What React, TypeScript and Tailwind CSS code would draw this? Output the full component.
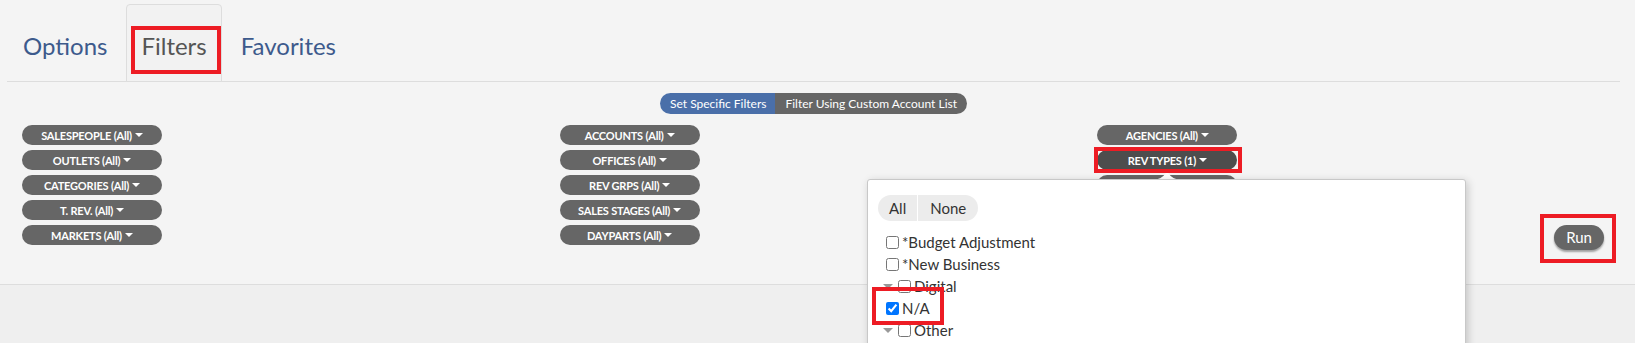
import React from 'react';

const leftCol = ['SALESPEOPLE (All)', 'OUTLETS (All)', 'CATEGORIES (All)', 'T. REV. (All)', 'MARKETS (All)'];
const midCol = ['ACCOUNTS (All)', 'OFFICES (All)', 'REV GRPS (All)', 'SALES STAGES (All)', 'DAYPARTS (All)'];
const rightCol = ['AGENCIES (All)', 'REV TYPES (1)', 'ADVERTISERS (All)'];

const Caret = () => (
  <span className="ml-[3px] inline-block w-0 h-0 border-l-[4px] border-r-[4px] border-t-[4px] border-l-transparent border-r-transparent border-t-white" />
);

const FilterButton: React.FC<{ label: string; active?: boolean }> = ({ label, active }) => (
  <button
    className={`w-[140px] h-[20px] rounded-[10px] flex items-center justify-center text-white text-[11px] font-bold tracking-[-0.2px] leading-none ${
      active ? 'bg-[#4d4d4d]' : 'bg-[#666666]'
    }`}
  >
    {label}
    <Caret />
  </button>
);

const TreeCaret = () => (
  <span className="inline-block w-0 h-0 border-l-[5px] border-r-[5px] border-t-[5px] border-l-transparent border-r-transparent border-t-[#999999]" />
);

const RedBox: React.FC<{ className: string }> = ({ className }) => (
  <div className={`absolute border-[4px] border-[#ed1c24] pointer-events-none ${className}`} />
);

export default function App() {
  return (
    <div className="relative w-full h-[343px] overflow-hidden bg-[#efefef] font-['Lato','Liberation_Sans',sans-serif]">
      <div className="h-[285px] bg-[#f4f4f4] border-b border-[#dddddd]">
        <div className="ml-[7px] w-[1613px]">
          {/* tabs */}
          <div className="flex items-end h-[82px] pt-[4px] pl-[1px] gap-[4px] border-b border-[#dddddd]">
            <div className="h-[77px] px-[15px] pt-[27px] text-[24px] leading-[29px] text-[#3d5a8c]">Options</div>
            <div className="h-[78px] px-[14px] pt-[26px] -mb-[1px] text-[24px] leading-[29px] text-[#555555] bg-[#f2f2f2] border border-[#dddddd] rounded-t-[4px]">
              Filters
            </div>
            <div className="h-[77px] px-[15px] pt-[27px] text-[24px] leading-[29px] text-[#3d5a8c]">Favorites</div>
          </div>

          {/* mode switch */}
          <div className="mt-[11px] flex justify-center">
            <div className="flex h-[21px] rounded-full overflow-hidden text-[12px] text-white leading-none">
              <div className="bg-[#4a6fa9] pl-[10px] pr-[9px] flex items-center">Set Specific Filters</div>
              <div className="bg-[#666666] pl-[10px] pr-[10px] flex items-center">Filter Using Custom Account List</div>
            </div>
          </div>

          {/* filter buttons */}
          <div className="mt-[11px] grid grid-cols-3">
            <div className="pl-[15px] flex flex-col gap-[5px]">
              {leftCol.map((l) => (
                <FilterButton key={l} label={l} />
              ))}
            </div>
            <div className="pl-[15px] flex flex-col gap-[5px]">
              {midCol.map((l) => (
                <FilterButton key={l} label={l} />
              ))}
            </div>
            <div className="pl-[15px] pr-[16px] flex justify-between">
              <div className="flex flex-col gap-[5px]">
                {rightCol.map((l) => (
                  <FilterButton key={l} label={l} active={l.startsWith('REV TYPES')} />
                ))}
              </div>
              <div className="pt-[100px]">
                <button className="h-[25px] px-[12px] rounded-full bg-[#666666] text-white text-[15px] leading-none shadow-[0_2px_2px_rgba(0,0,0,0.35)]">
                  Run
                </button>
              </div>
            </div>
          </div>
        </div>
      </div>

      {/* rev types dropdown */}
      <svg className="absolute left-[1153px] top-[172px]" width="28" height="8" viewBox="0 0 28 8">
        <path d="M0 8 Q9 7 12 2 Q14 -1 16 2 Q19 7 28 8 Z" fill="#ffffff" />
      </svg>
      <div className="absolute left-[867px] top-[179px] w-[599px] h-[200px] bg-white border border-[#c8c8c8] rounded-[3px] shadow-[2px_2px_8px_rgba(0,0,0,0.18)] pl-[10px] pt-[15px]">
        <div className="inline-flex h-[26px] rounded-full bg-[#ececec] text-[15px] text-[#333333] leading-none overflow-hidden">
          <div className="px-[11px] flex items-center">All</div>
          <div className="px-[12px] flex items-center border-l border-white">None</div>
        </div>
        <div className="mt-[10px] text-[15px] text-[#333333] leading-none">
          <div className="h-[22px] flex items-center pl-[8px]">
            <input type="checkbox" readOnly className="m-0 w-[13px] h-[13px]" />
            <span className="ml-[3px]">*Budget Adjustment</span>
          </div>
          <div className="h-[22px] flex items-center pl-[8px]">
            <input type="checkbox" readOnly className="m-0 w-[13px] h-[13px]" />
            <span className="ml-[3px]">*New Business</span>
          </div>
          <div className="h-[22px] flex items-center pl-[5px]">
            <TreeCaret />
            <input type="checkbox" readOnly className="m-0 ml-[5px] w-[13px] h-[13px]" />
            <span className="ml-[3px]">Digital</span>
          </div>
          <div className="h-[22px] flex items-center pl-[8px]">
            <input type="checkbox" readOnly checked className="m-0 w-[13px] h-[13px]" />
            <span className="ml-[3px]">N/A</span>
          </div>
          <div className="h-[22px] flex items-center pl-[5px]">
            <TreeCaret />
            <input type="checkbox" readOnly className="m-0 ml-[5px] w-[13px] h-[13px]" />
            <span className="ml-[3px]">Other</span>
          </div>
        </div>
      </div>

      {/* annotations */}
      <RedBox className="left-[131px] top-[26px] w-[90px] h-[48px]" />
      <RedBox className="left-[1094px] top-[147px] w-[148px] h-[26px]" />
      <RedBox className="left-[872px] top-[287px] w-[72px] h-[38px]" />
      <RedBox className="left-[1540px] top-[214px] w-[76px] h-[49px]" />
    </div>
  );
}
